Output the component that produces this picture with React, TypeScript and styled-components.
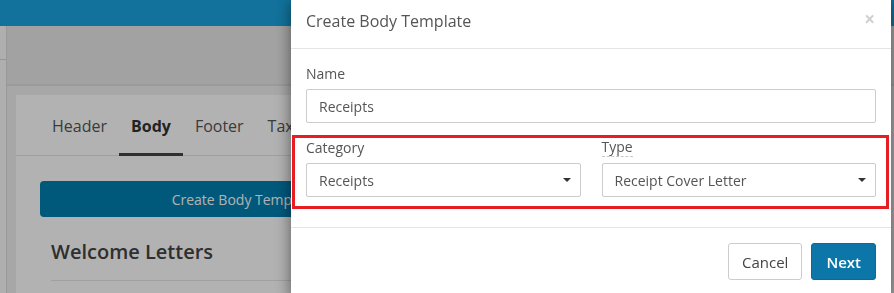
import React from "react";
import styled, { createGlobalStyle } from "styled-components";

const GlobalStyle = createGlobalStyle`
  html, body {
    margin: 0;
    padding: 0;
    height: 100%;
    overflow: hidden;
    background: #f0f0f0;
    font-family: "Open Sans", "Liberation Sans", Arial, sans-serif;
    font-size: 14px;
    color: #333;
  }
  * { box-sizing: border-box; }
`;

const Page = styled.div`
  display: flex;
  flex-direction: column;
  height: 100vh;
`;

const TopBar = styled.header`
  height: 26px;
  background: #1aa4df;
  flex-shrink: 0;
`;

const Shell = styled.div`
  display: flex;
  flex: 1;
`;

const Sidebar = styled.aside`
  width: 7px;
  background: #fbfbfb;
  border-right: 1px solid #dcdcdc;
  padding-top: 33px;

  &::before {
    content: "";
    display: block;
    border-top: 1px solid #d6d6d6;
  }
`;

const Main = styled.main`
  flex: 1;
  display: flex;
  flex-direction: column;
`;

const SubHeader = styled.div`
  height: 60px;
  background: #e9e9e9;
  border-bottom: 2px solid #dedede;
`;

const Content = styled.div`
  flex: 1;
  padding: 9px 0 0 9px;
`;

const Panel = styled.section`
  background: #fff;
  height: 100%;
  width: 620px;
`;

const TabList = styled.nav`
  display: flex;
  padding-left: 24px;
  border-bottom: 1px solid #e5e5e5;
`;

const Tab = styled.span<{ $active?: boolean }>`
  font-size: 16px;
  line-height: 22px;
  padding: 20px 12px 16px;
  margin-bottom: -1px;
  color: ${(p) => (p.$active ? "#333" : "#555")};
  font-weight: ${(p) => (p.$active ? 700 : 400)};
  border-bottom: 3px solid ${(p) => (p.$active ? "#444" : "transparent")};
`;

const PanelBody = styled.div`
  width: 432px;
  padding: 25px 0 0 24px;
`;

const PrimaryWide = styled.div`
  height: 36px;
  border-radius: 4px;
  background: #007eb0;
  color: #fff;
  display: flex;
  align-items: center;
  justify-content: center;
  font-size: 14px;
`;

const SectionTitle = styled.h3`
  margin: 21px 0 0 11px;
  font-size: 20px;
  font-weight: 600;
  color: #444;
  line-height: 28px;
  padding-bottom: 14px;
  border-bottom: 1px solid #e5e5e5;
`;

const Backdrop = styled.div`
  position: fixed;
  inset: 0;
  background: rgba(0, 0, 0, 0.3);
`;

const Modal = styled.div`
  position: fixed;
  top: -4px;
  left: 291px;
  width: 600px;
  background: #fff;
  box-shadow: 0 5px 15px rgba(0, 0, 0, 0.5);
`;

const ModalHeader = styled.div`
  display: flex;
  align-items: center;
  justify-content: space-between;
  padding: 14px 15px 15px;
  border-bottom: 1px solid #e5e5e5;
`;

const ModalTitle = styled.h4`
  margin: 0;
  font-size: 16px;
  font-weight: 400;
  line-height: 23px;
  color: #555;
`;

const Close = styled.span`
  font-size: 19px;
  line-height: 19px;
  font-weight: 700;
  color: #d0d0d0;
  margin-right: 1px;
  margin-top: -4px;
`;

const ModalBody = styled.div`
  padding: 15px;
`;

const Field = styled.div`
  display: flex;
  flex-direction: column;
  margin-bottom: 15px;
`;

const Label = styled.label<{ $dotted?: boolean }>`
  font-size: 14px;
  line-height: 20px;
  color: #555;
  margin-bottom: 5px;
  align-self: flex-start;
  ${(p) => p.$dotted && "border-bottom: 1px dashed #c8c8c8; line-height: 18px; margin-bottom: 6px;"}
`;

const Input = styled.div`
  height: 34px;
  border: 1px solid #ccc;
  border-radius: 2px;
  padding: 0 12px;
  display: flex;
  align-items: center;
  font-size: 14px;
  color: #555;
`;

const Select = styled(Input)`
  justify-content: space-between;
  padding-right: 9px;
`;

const Caret = styled.span`
  width: 0;
  height: 0;
  border-left: 4px solid transparent;
  border-right: 4px solid transparent;
  border-top: 4px solid #333;
`;

const HighlightRow = styled.div`
  position: relative;
  display: grid;
  grid-template-columns: 1fr 1fr;
  gap: 21px;
  margin-bottom: 15px;

  & > ${Field} {
    margin-bottom: 0;
  }

  &::after {
    content: "";
    position: absolute;
    top: -3px;
    left: -14px;
    right: -13px;
    bottom: -12px;
    border: 3px solid #e61e24;
    pointer-events: none;
  }
`;

const ModalFooter = styled.div`
  border-top: 1px solid #e5e5e5;
  padding: 15px;
  display: flex;
  justify-content: flex-end;
  gap: 9px;
`;

const Button = styled.button<{ $primary?: boolean }>`
  height: 37px;
  padding: 0 ${(p) => (p.$primary ? 14 : 13)}px;
  border-radius: 3px;
  font-family: inherit;
  font-size: 15px;
  font-weight: ${(p) => (p.$primary ? 600 : 400)};
  border: 1px solid ${(p) => (p.$primary ? "#0a6a98" : "#ccc")};
  background: ${(p) => (p.$primary ? "#0b76a7" : "#fff")};
  color: ${(p) => (p.$primary ? "#fff" : "#444")};
`;

export default function App() {
  return (
    <>
      <GlobalStyle />
      <Page>
        <TopBar />
        <Shell>
          <Sidebar />
          <Main>
            <SubHeader />
            <Content>
              <Panel>
                <TabList>
                  <Tab>Header</Tab>
                  <Tab $active>Body</Tab>
                  <Tab>Footer</Tab>
                  <Tab>Tax</Tab>
                </TabList>
                <PanelBody>
                  <PrimaryWide>Create Body Template</PrimaryWide>
                  <SectionTitle>Welcome Letters</SectionTitle>
                </PanelBody>
              </Panel>
            </Content>
          </Main>
        </Shell>
      </Page>
      <Backdrop />
      <Modal>
        <ModalHeader>
          <ModalTitle>Create Body Template</ModalTitle>
          <Close>×</Close>
        </ModalHeader>
        <ModalBody>
          <Field>
            <Label>Name</Label>
            <Input>Receipts</Input>
          </Field>
          <HighlightRow>
            <Field>
              <Label>Category</Label>
              <Select>
                Receipts
                <Caret />
              </Select>
            </Field>
            <Field>
              <Label $dotted>Type</Label>
              <Select>
                Receipt Cover Letter
                <Caret />
              </Select>
            </Field>
          </HighlightRow>
        </ModalBody>
        <ModalFooter>
          <Button>Cancel</Button>
          <Button $primary>Next</Button>
        </ModalFooter>
      </Modal>
    </>
  );
}
